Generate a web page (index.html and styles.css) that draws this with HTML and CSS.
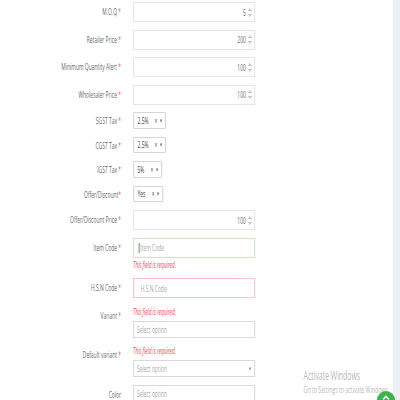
FILE: index.html
```html
<!DOCTYPE html>
<html lang="en">
<head>
  <meta charset="UTF-8" />
  <meta name="viewport" content="width=device-width, initial-scale=1.0"/>
  <title>Add Product</title>
  <link rel="stylesheet" href="styles.css">
</head>
<body>

  <!-- Product form (page is squeezed horizontally like the capture) -->
  <div class="page">
    <form class="form">

      <div class="row">
        <label class="lbl">M.O.Q <span class="req">*</span></label>
        <div class="box num">5<span class="spin"></span></div>
      </div>

      <div class="row">
        <label class="lbl">Retailer Price <span class="req">*</span></label>
        <div class="box num">200<span class="spin"></span></div>
      </div>

      <div class="row">
        <label class="lbl">Minimum Quantity Alert <span class="req">*</span></label>
        <div class="box num">100<span class="spin"></span></div>
      </div>

      <div class="row">
        <label class="lbl">Wholesaler Price <span class="req">*</span></label>
        <div class="box num">100<span class="spin"></span></div>
      </div>

      <div class="row sm">
        <label class="lbl">SGST Tax <span class="req">*</span></label>
        <div class="pick w60"><span class="val">2.5%</span><span class="x">×</span><span class="caret">▾</span></div>
      </div>

      <div class="row sm">
        <label class="lbl">CGST Tax <span class="req">*</span></label>
        <div class="pick w60"><span class="val">2.5%</span><span class="x">×</span><span class="caret">▾</span></div>
      </div>

      <div class="row sm">
        <label class="lbl">IGST Tax <span class="req">*</span></label>
        <div class="pick w53"><span class="val">5%</span><span class="x">×</span><span class="caret">▾</span></div>
      </div>

      <div class="row sm">
        <label class="lbl">Offer/Discount<span class="req">*</span></label>
        <div class="pick w55"><span class="val">Yes</span><span class="x">×</span><span class="caret">▾</span></div>
      </div>

      <div class="row">
        <label class="lbl">Offer/Discount Price <span class="req">*</span></label>
        <div class="box num">100<span class="spin"></span></div>
      </div>

      <div class="row">
        <label class="lbl">Item Code <span class="req">*</span></label>
        <div class="ctl">
          <div class="box ok"><span class="cursor"></span><span class="ph">Item Code</span></div>
          <div class="err">This field is required.</div>
        </div>
      </div>

      <div class="row">
        <label class="lbl">H.S.N Code <span class="req">*</span></label>
        <div class="box bad"><span class="ph">H.S.N Code</span></div>
      </div>

      <div class="row">
        <label class="lbl">Variant <span class="req">*</span></label>
        <div class="ctl">
          <div class="err top">This field is required.</div>
          <div class="box opt"><span class="ph">Select option</span></div>
        </div>
      </div>

      <div class="row">
        <label class="lbl">Default variant <span class="req">*</span></label>
        <div class="ctl">
          <div class="err top">This field is required.</div>
          <div class="box opt"><span class="ph">Select option</span><span class="caret">▾</span></div>
        </div>
      </div>

      <div class="row">
        <label class="lbl">Color</label>
        <div class="box opt"><span class="ph">Select option</span></div>
      </div>

    </form>

    <div class="watermark">
      <div class="wm-title">Activate Windows</div>
      <div class="wm-sub">Go to Settings to activate Windows.</div>
    </div>
  </div>

  <a href="#" class="to-top">
    <svg width="10" height="10" viewBox="0 0 10 10"><path d="M2 6.5 L5 3.5 L8 6.5" fill="none" stroke="#fff" stroke-width="1.6"/></svg>
  </a>

</body>
</html>
```

FILE: styles.css
```css
* {
  box-sizing: border-box;
  margin: 0;
  padding: 0;
}

html, body {
  overflow: hidden;
}

body {
  font-family: 'Open Sans', 'Liberation Sans', sans-serif;
  background: #eef0f5;
  color: #676a6c;
  height: 400px;
}

/* whole sheet squeezed to 55% width */
.page {
  position: relative;
  width: 714px;
  height: 400px;
  background: #fff;
  transform: scaleX(0.55);
  transform-origin: 0 0;
}

.form {
  padding-top: 2px;
}

.row {
  display: flex;
  align-items: flex-start;
  gap: 22px;
  margin-bottom: 7.5px;
}

.lbl {
  width: 220px;
  text-align: right;
  font-size: 9px;
  line-height: 20px;
  color: #676a6c;
}

.row.sm .lbl {
  line-height: 17px;
}

.req {
  color: #ed5565;
}

.ctl {
  width: 222px;
}

.box {
  display: flex;
  align-items: center;
  width: 222px;
  height: 20px;
  border: 1px solid #e5e6e7;
  border-left-width: 2px;
  border-right-width: 2px;
  padding: 0 6px;
  font-size: 9px;
  color: #676a6c;
}

.box.num {
  justify-content: flex-end;
  padding-right: 4px;
}

.spin {
  width: 8px;
  height: 11px;
  margin-left: 3px;
  background:
    linear-gradient(to bottom right, transparent 50%, #c4c4c4 50%) 0 1px / 4px 3px no-repeat,
    linear-gradient(to bottom left, transparent 50%, #c4c4c4 50%) 4px 1px / 4px 3px no-repeat,
    linear-gradient(to top right, transparent 50%, #c4c4c4 50%) 0 7px / 4px 3px no-repeat,
    linear-gradient(to top left, transparent 50%, #c4c4c4 50%) 4px 7px / 4px 3px no-repeat;
}

.box.ok {
  border-color: #cde7c6;
  padding-left: 8px;
}

.box.bad {
  border-color: #f7c1c6;
  padding-left: 12px;
}

.box.opt {
  height: 17px;
  border-color: #d9d9d9;
  padding-left: 5px;
}

.cursor {
  width: 2px;
  height: 10px;
  background: #8a8a8a;
  margin-right: 1px;
}

.ph {
  color: #a9a9a9;
  font-size: 9px;
}

.box .caret {
  margin-left: auto;
  font-size: 7px;
  color: #888;
}

.pick {
  display: flex;
  align-items: center;
  height: 16.5px;
  border: 1px solid #d6d6d6;
  border-left-width: 2px;
  border-right-width: 2px;
  border-radius: 2px;
  padding: 0 5px 0 6px;
  font-size: 9px;
  color: #444;
}

.w60 { width: 60px; }
.w53 { width: 53px; }
.w55 { width: 55px; }

.pick .x {
  margin-left: auto;
  font-size: 9px;
  color: #555;
}

.pick .caret {
  margin-left: 5px;
  font-size: 7px;
  color: #666;
}

.err {
  font-size: 8.5px;
  font-style: italic;
  color: #ed3b4b;
  line-height: 12px;
  padding-top: 1px;
}

.err.top {
  padding-top: 0;
  margin-bottom: 3px;
}

/* windows watermark */
.watermark {
  position: absolute;
  left: 552px;
  top: 368px;
  color: #b8b8b8;
}

.wm-title {
  font-size: 12.5px;
  line-height: 15px;
}

.wm-sub {
  font-size: 9.5px;
  line-height: 13px;
}

.to-top {
  position: fixed;
  left: 377px;
  top: 391px;
  width: 18px;
  height: 18px;
  border-radius: 50%;
  background: #3cb44a;
  display: flex;
  justify-content: center;
  padding-top: 2px;
}
```
